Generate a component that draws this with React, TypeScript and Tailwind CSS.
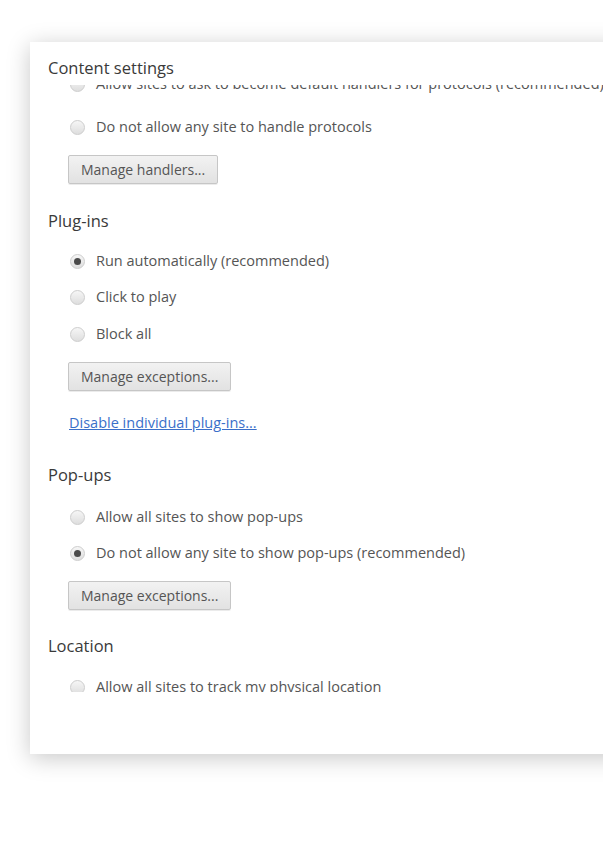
import type { ReactNode } from 'react';

const font = { fontFamily: '"Open Sans", "Noto Sans", Arial, sans-serif' };

const Radio = ({ checked, label }: { checked?: boolean; label: string }) => (
  <div className="h-9 flex items-center pl-[22px]">
    <span className="w-[15px] h-[15px] rounded-full border border-[#cdcdcd] bg-gradient-to-b from-[#f6f6f6] to-[#dedede] flex items-center justify-center shrink-0">
      {checked && <span className="w-[7px] h-[7px] rounded-full bg-[#4a4a4a]" />}
    </span>
    <span className="ml-[11px] text-[14.5px] text-[#555] whitespace-nowrap">{label}</span>
  </div>
);

const Button = ({ children }: { children: ReactNode }) => (
  <div className="pl-[20px] mt-[10px]">
    <button className="h-[29px] px-[12px] rounded-[2px] border border-[#c6c6c6] bg-gradient-to-b from-[#f2f2f2] to-[#e2e2e2] text-[14px] text-[#555] shadow-[0_1px_0_rgba(0,0,0,0.08)]">
      {children}
    </button>
  </div>
);

const Heading = ({ children, top, bottom }: { children: ReactNode; top: string; bottom: string }) => (
  <h3 className={`h-5 leading-5 text-[16.5px] text-[#3a3a3a] ${top} ${bottom}`}>{children}</h3>
);

export default function App() {
  return (
    <div className="w-full min-h-screen bg-white overflow-hidden pt-[42px] pl-[30px]" style={font}>
      <div className="w-[640px] h-[712px] bg-white flex flex-col shadow-[0_4px_22px_rgba(0,0,0,0.22)]">
        <div className="h-[43px] pl-[18px] pt-[16px]">
          <h2 className="text-[16.5px] leading-5 text-[#3a3a3a]">Content settings</h2>
        </div>
        <div className="h-[607px] overflow-hidden pl-[18px]">
          <div className="-mt-[19px]">
            <Radio label="Allow sites to ask to become default handlers for protocols (recommended)" />
            <div className="mt-[7px]">
              <Radio label="Do not allow any site to handle protocols" />
            </div>
            <Button>Manage handlers...</Button>

            <Heading top="mt-[27px]" bottom="mb-[12px]">Plug-ins</Heading>
            <Radio checked label="Run automatically (recommended)" />
            <Radio label="Click to play" />
            <div className="mt-[1px]">
              <Radio label="Block all" />
            </div>
            <Button>Manage exceptions...</Button>
            <div className="pl-[21px] mt-[21px] h-5 leading-5">
              <a href="#" className="text-[14.5px] text-[#3a6fc9] underline">Disable individual plug-ins...</a>
            </div>

            <Heading top="mt-[33px]" bottom="mb-[14px]">Pop-ups</Heading>
            <Radio label="Allow all sites to show pop-ups" />
            <Radio checked label="Do not allow any site to show pop-ups (recommended)" />
            <Button>Manage exceptions...</Button>

            <Heading top="mt-[26px]" bottom="mb-[13px]">Location</Heading>
            <Radio label="Allow all sites to track my physical location" />
          </div>
        </div>
        <div className="flex-1" />
      </div>
    </div>
  );
}
